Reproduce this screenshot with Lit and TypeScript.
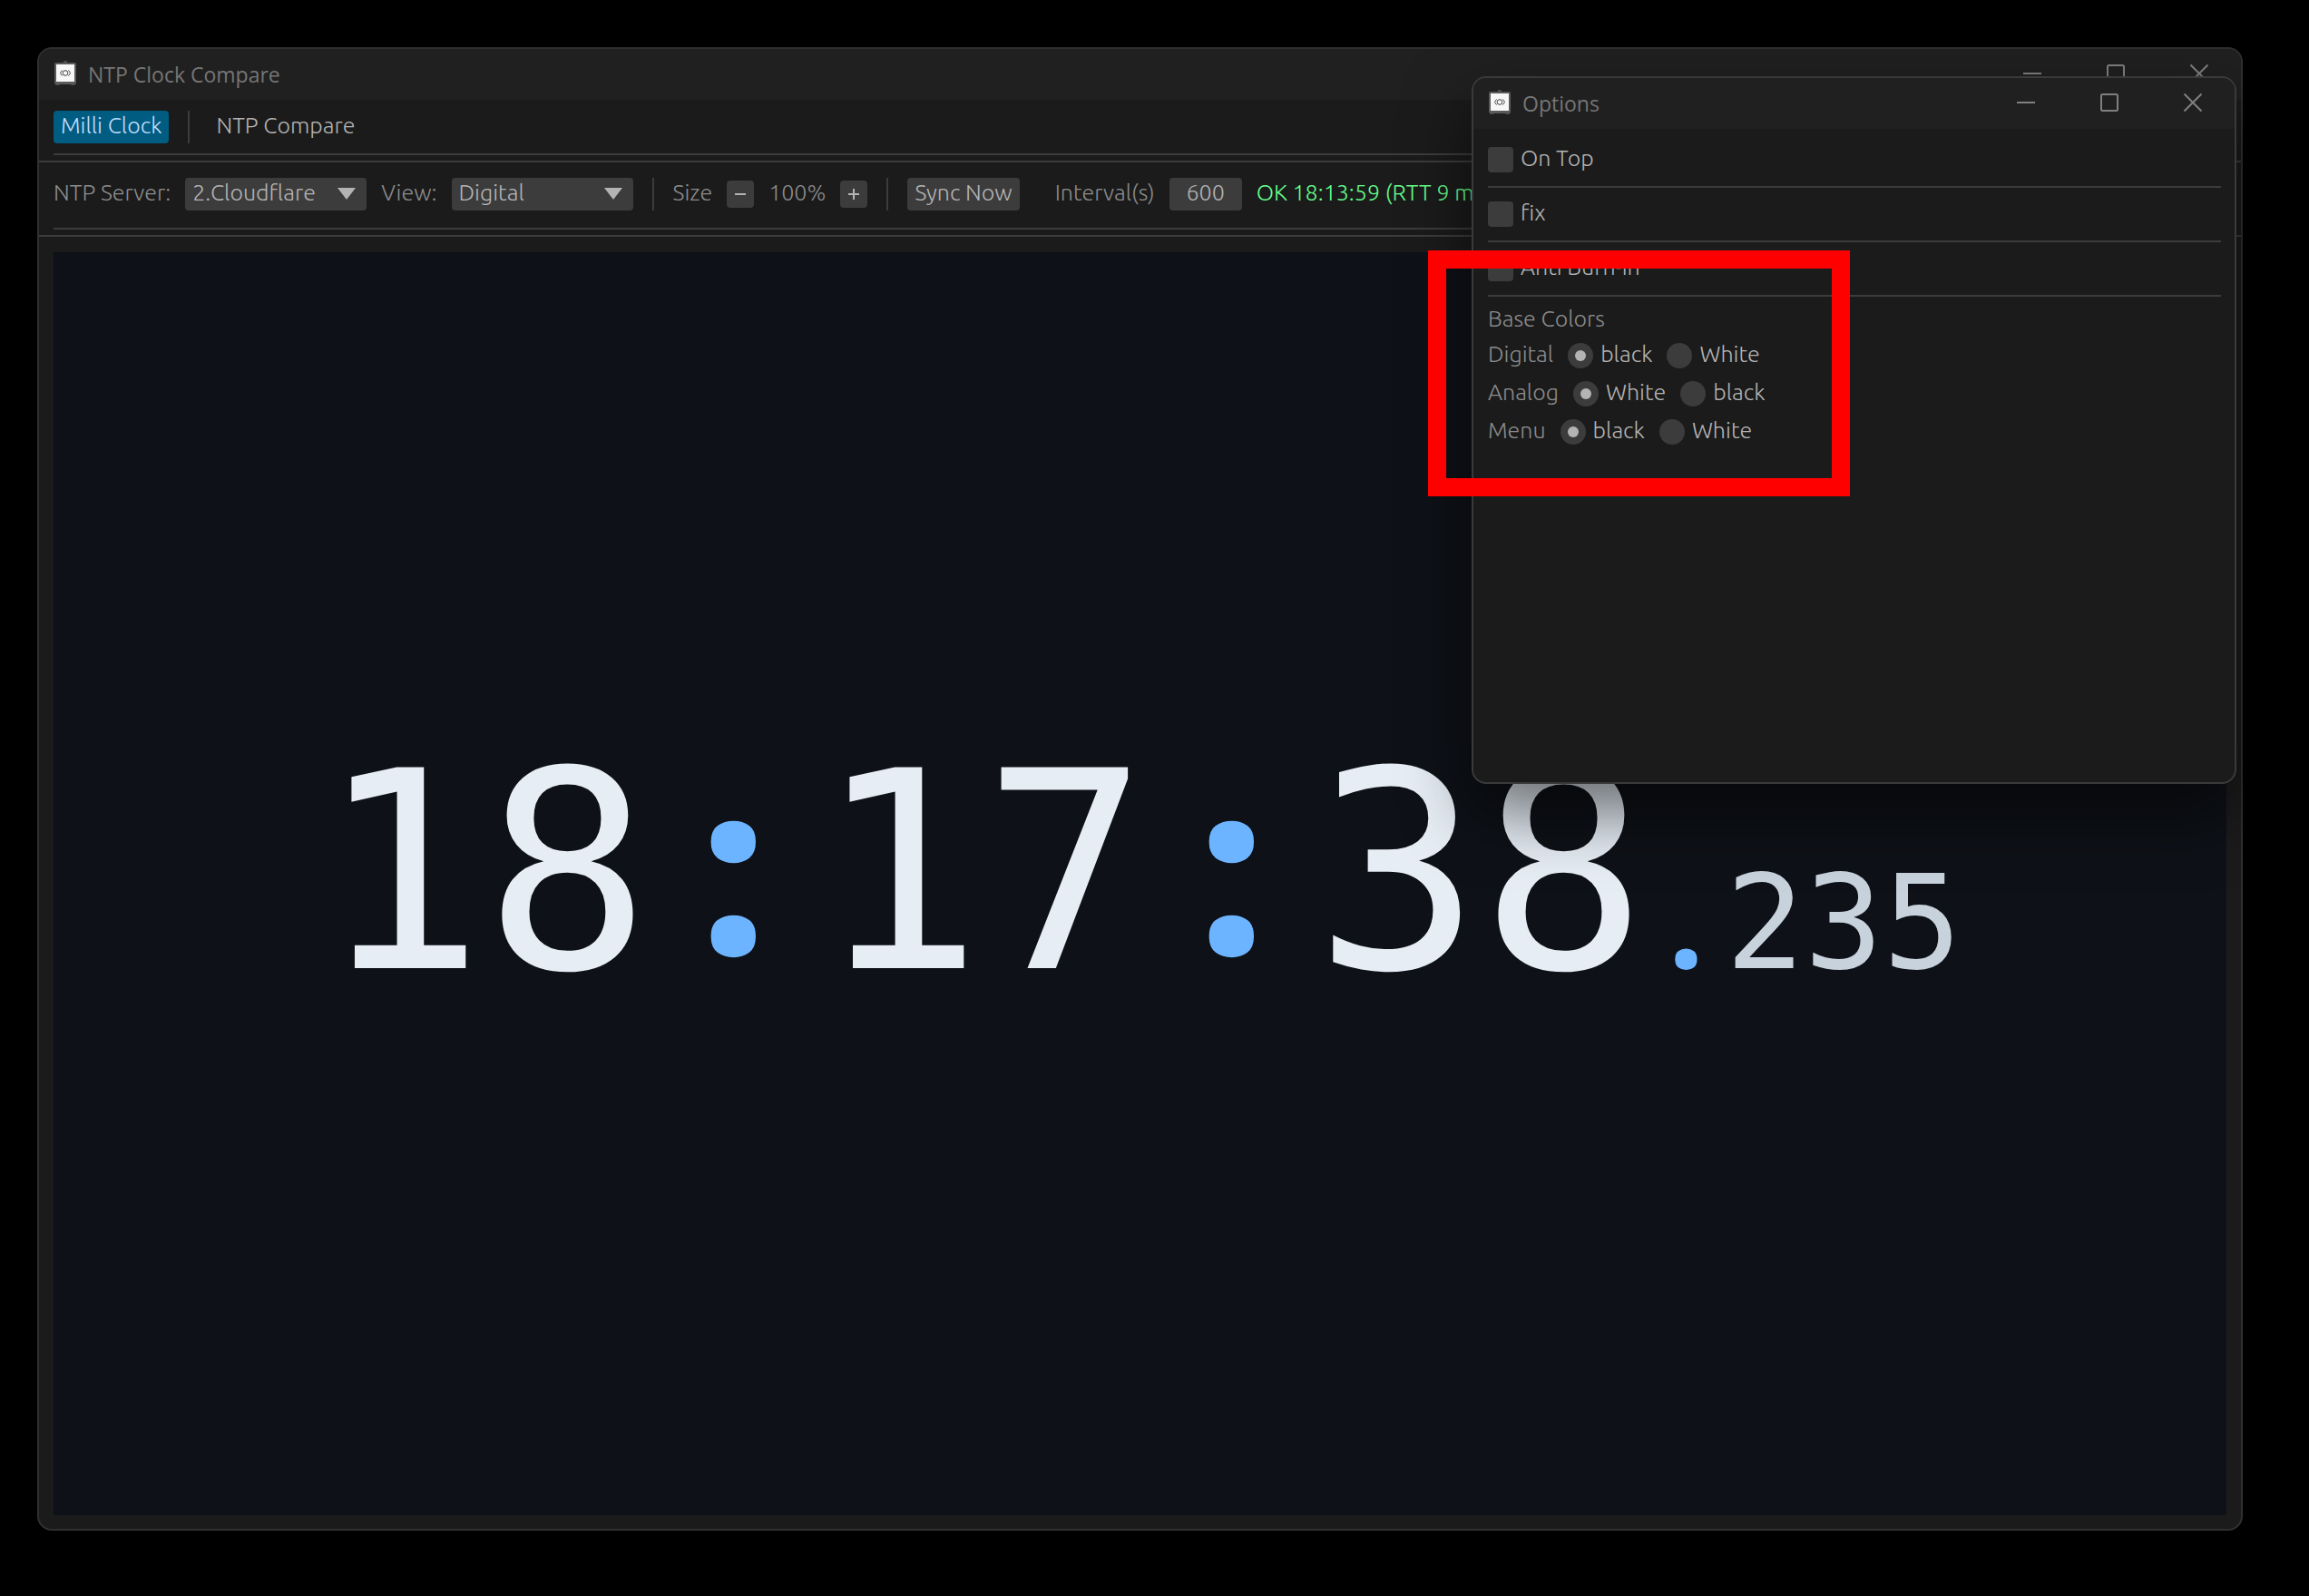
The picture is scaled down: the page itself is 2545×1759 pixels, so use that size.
import { LitElement, html, svg, css } from "lit";
import { customElement, property } from "lit/decorators.js";

@customElement("title-bar")
class TitleBar extends LitElement {
  @property() label = "";

  static styles = css`
    :host { display: block; }
    .bar { display: flex; align-items: center; height: 56px; padding-left: 16px; background: #202020; }
    .logo { width: 26px; height: 28px; margin-bottom: 2px; }
    .name { margin: 0 auto 0 12px; font: 400 23px/32px "Open Sans", sans-serif; color: #757575; white-space: nowrap; }
    .ctl { width: 92px; height: 56px; padding: 0; border: 0; background: none; color: #808080; display: grid; place-items: center; }
    .glyph { width: 20px; height: 20px; overflow: visible; fill: none; stroke: currentColor; stroke-width: 2; margin-bottom: 2px; }
  `;

  private control(name: string, shape: unknown) {
    return html`<button class="ctl" aria-label=${name}><svg class="glyph" viewBox="0 0 20 20">${shape}</svg></button>`;
  }

  render() {
    return html`
      <div class="bar">
        <svg class="logo" viewBox="0 0 26 28" aria-hidden="true">
          <rect x="11" y="0" width="4" height="3" fill="#4a4a4a"></rect>
          <rect x="2" y="24" width="5" height="3" rx="1" fill="#4a4a4a"></rect>
          <rect x="19" y="24" width="5" height="3" rx="1" fill="#4a4a4a"></rect>
          <rect x="1" y="2" width="24" height="24" rx="2" fill="#5a5a5a"></rect>
          <rect x="3" y="4" width="20" height="19" fill="#f7f7f7"></rect>
          <g fill="none" stroke="#444" stroke-width="1">
            <circle cx="13" cy="13.500" r="2.800"></circle>
            <path d="M9.500 10.500 7.500 13.500 9.500 16.500M16.500 10.500 18.500 13.500 16.500 16.500"></path>
          </g>
        </svg>
        <span class="name">${this.label}</span>
        ${this.control("Minimize", svg`<path d="M0 10H20"/>`)}
        ${this.control("Maximize", svg`<rect x="1" y="1" width="18" height="18" rx="1.500"/>`)}
        ${this.control("Close", svg`<path d="M0.500 0.500 19.500 19.500M19.500 0.500 0.500 19.500"/>`)}
      </div>
    `;
  }
}

@customElement("options-window")
class OptionsWindow extends LitElement {
  static styles = css`
    :host { display: block; font: 300 25px/32px Ubuntu, "Open Sans", sans-serif; color: #b4b4b4; }
    .win { box-sizing: border-box; height: 780px; border: 2px solid #3a3a3c; border-radius: 16px; background: #1b1b1b; overflow: hidden; box-shadow: 0 32px 72px rgba(0, 0, 0, 0.55); }
    .body { display: flex; flex-direction: column; padding: 16px 15px 0 16px; }
    .choice { display: flex; align-items: center; gap: 8px; height: 36px; }
    .choice span { margin-bottom: 5px; }
    .rule { width: 100%; height: 2px; margin: 11px 0; border: 0; background: #3c3c3c; }
    .rule.last { margin-bottom: 8px; }
    .box { appearance: none; width: 28px; height: 28px; margin: 0; border-radius: 4px; background: #3c3c3c; display: grid; place-items: center; }
    .box.round { border-radius: 50%; }
    .box:checked::after { content: ""; width: 12px; height: 12px; border-radius: 50%; background: #b4b4b4; }
    .head { margin: 0; height: 33px; font: inherit; color: #8c8c8c; }
    .group { display: flex; align-items: center; gap: 16px; height: 36px; margin: 6px 0 0; }
    .key { color: #8c8c8c; margin-bottom: 5px; }
  `;

  private checks = ["On Top", "fix", "Anti Burn-in"];
  private groups: [string, string[]][] = [
    ["Digital", ["black", "White"]],
    ["Analog", ["White", "black"]],
    ["Menu", ["black", "White"]],
  ];

  render() {
    return html`
      <section class="win" aria-label="Options">
        <title-bar label="Options"></title-bar>
        <div class="body">
          ${this.checks.map((c, i) => html`
            <label class="choice"><input class="box" type="checkbox"><span>${c}</span></label>
            <hr class=${i === this.checks.length - 1 ? "rule last" : "rule"}>
          `)}
          <h2 class="head">Base Colors</h2>
          ${this.groups.map(([name, values]) => html`
            <div class="group" role="radiogroup" aria-label=${name}>
              <span class="key">${name}</span>
              ${values.map((v, i) => html`
                <label class="choice"><input class="box round" type="radio" name=${name} .checked=${i === 0}><span>${v}</span></label>
              `)}
            </div>
          `)}
        </div>
      </section>
    `;
  }
}

@customElement("app-root")
class AppRoot extends LitElement {
  static styles = css`
    :host { display: block; }
    .desktop { position: relative; box-sizing: border-box; min-height: 100vh; padding: 52px 73px 72px 41px; background: #000; display: flex; font: 300 25px/32px Ubuntu, "Open Sans", sans-serif; color: #8c8c8c; overflow: hidden; }
    .win { flex: 1; min-width: 0; display: flex; flex-direction: column; border: 2px solid #303030; border-radius: 16px; background: #1b1b1b; overflow: hidden; }
    .row { display: flex; align-items: center; height: 36px; padding: 0 16px; white-space: nowrap; }
    .tabs { margin-top: 12px; }
    .tools { margin-top: 17px; gap: 16px; }
    .rule { height: 2px; border: 0; margin: 6px 0 0; background: #3c3c3c; flex: none; }
    .rule.inset { margin: 11px 16px 0; }
    .rule.low { margin-top: 19px; }
    .btn { box-sizing: border-box; height: 36px; padding: 0 8px 5px; border: 0; border-radius: 4px; background: #3c3c3c; color: #b4b4b4; font: inherit; }
    .tab { background: none; }
    .tab.on { background: #005c80; color: #c0deff; }
    .bar { width: 2px; height: 36px; background: #3c3c3c; }
    .tabs .bar { margin: 0 21px; }
    .text { padding-bottom: 5px; }
    .pick { position: relative; width: 200px; height: 36px; }
    .pick select { appearance: none; box-sizing: border-box; width: 100%; height: 36px; padding: 0 36px 5px 8px; border: 0; border-radius: 4px; background: #3c3c3c; color: #b4b4b4; font: inherit; }
    .arrow { position: absolute; right: 12px; top: 11px; width: 20px; height: 13px; fill: #b4b4b4; pointer-events: none; }
    .btn.step { width: 30px; height: 30px; padding: 0; display: grid; place-items: center; }
    .step svg { width: 12px; height: 12px; stroke: #b4b4b4; stroke-width: 2; }
    .field { box-sizing: border-box; width: 80px; height: 36px; padding: 0 0 5px; border: 0; border-radius: 4px; background: #3c3c3c; color: #b4b4b4; font: inherit; text-align: center; }
    .group { display: flex; align-items: center; gap: 16px; margin-left: 23px; }
    .divider { margin: 0 5px; }
    .ok { color: #66ff8c; }
    .face { flex: 1; margin: 17px 16px 15px; padding-bottom: 24px; background: #0e1117; display: flex; align-items: center; justify-content: center; }
    .time { display: flex; align-items: baseline; font: 400 304px/1 "DejaVu Sans Mono", monospace; color: #e6edf5; }
    .colon { width: 183px; padding-bottom: 32px; font: 800 264px/1 "Noto Sans", sans-serif; color: #6cb4ff; text-align: center; align-self: flex-end; }
    .dot { width: 87px; font: 700 140px/1 "Noto Sans", sans-serif; color: #6cb4ff; text-align: center; }
    .ms { font-size: 144px; color: #c8d2dc; }
    .options { position: absolute; top: 84px; right: 80px; width: 843px; }
    .mark { position: absolute; left: -48px; top: 192px; width: 465px; height: 271px; box-sizing: border-box; border: 20px solid #f00; pointer-events: none; }
  `;

  private picker(label: string, id: string, values: string[]) {
    return html`
      <label class="text" for=${id}>${label}</label>
      <span class="pick">
        <select id=${id}>${values.map((v) => html`<option>${v}</option>`)}</select>
        <svg class="arrow" viewBox="0 0 20 13" aria-hidden="true"><path d="M0 0H20L10 13Z"></path></svg>
      </span>
    `;
  }

  render() {
    return html`
      <main class="desktop">
        <section class="win" aria-label="NTP Clock Compare">
          <title-bar label="NTP Clock Compare"></title-bar>
          <nav class="row tabs">
            <button class="btn tab on">Milli Clock</button>
            <span class="bar"></span>
            <button class="btn tab">NTP Compare</button>
          </nav>
          <hr class="rule inset">
          <hr class="rule">
          <div class="row tools">
            ${this.picker("NTP Server:", "server", ["2.Cloudflare"])}
            ${this.picker("View:", "view", ["Digital"])}
            <span class="bar divider"></span>
            <span class="text">Size</span>
            <button class="btn step" aria-label="Smaller"><svg viewBox="0 0 12 12"><path d="M0 6H12"></path></svg></button>
            <span class="text">100%</span>
            <button class="btn step" aria-label="Larger"><svg viewBox="0 0 12 12"><path d="M0 6H12M6 0V12"></path></svg></button>
            <span class="bar divider"></span>
            <button class="btn">Sync Now</button>
            <div class="group">
              <label class="text" for="interval">Interval(s)</label>
              <input class="field" id="interval" value="600">
            </div>
            <span class="text ok">OK 18:13:59 (RTT 9 ms)</span>
          </div>
          <hr class="rule inset low">
          <hr class="rule">
          <div class="face">
            <div class="time"><span>18</span><span class="colon">:</span><span>17</span><span class="colon">:</span><span>38</span><span class="dot">.</span><span class="ms">235</span></div>
          </div>
        </section>
        <div class="options">
          <options-window></options-window>
          <div class="mark"></div>
        </div>
      </main>
    `;
  }
}
